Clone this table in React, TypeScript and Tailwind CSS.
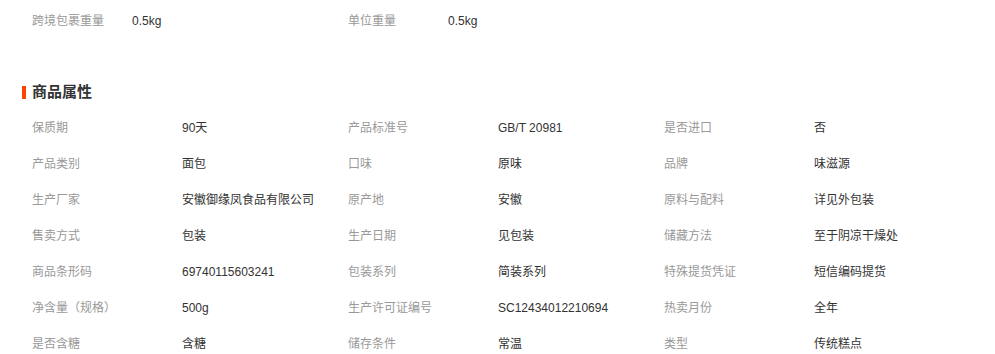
import React from 'react';

const topRow = [
  { label: '跨境包裹重量', value: '0.5kg' },
  { label: '单位重量', value: '0.5kg' },
];

const attrs: [string, string][] = [
  ['保质期', '90天'],
  ['产品标准号', 'GB/T 20981'],
  ['是否进口', '否'],
  ['产品类别', '面包'],
  ['口味', '原味'],
  ['品牌', '味滋源'],
  ['生产厂家', '安徽御缘凤食品有限公司'],
  ['原产地', '安徽'],
  ['原料与配料', '详见外包装'],
  ['售卖方式', '包装'],
  ['生产日期', '见包装'],
  ['储藏方法', '至于阴凉干燥处'],
  ['商品条形码', '69740115603241'],
  ['包装系列', '简装系列'],
  ['特殊提货凭证', '短信编码提货'],
  ['净含量（规格）', '500g'],
  ['生产许可证编号', 'SC12434012210694'],
  ['热卖月份', '全年'],
  ['是否含糖', '含糖'],
  ['储存条件', '常温'],
  ['类型', '传统糕点'],
];

export default function App() {
  return (
    <div className="w-[995px] h-[354px] overflow-hidden bg-white font-['Liberation_Sans','Noto_Sans_CJK_SC',sans-serif] text-[12px]">
      {/* Weight row */}
      <div className="mt-[3px] ml-[32px] flex h-9 items-center">
        {topRow.map((item, i) => (
          <div key={i} className="flex w-[316px] items-center">
            <span className="w-[100px] text-[#999]">{item.label}</span>
            <span className="text-[#333]">{item.value}</span>
          </div>
        ))}
      </div>

      {/* Section header */}
      <div className="mt-[36px] ml-[22px] flex h-[35px] items-center">
        <span className="mr-[6px] h-[13px] w-[4px] bg-[#ff4400]" />
        <h3 className="text-[15px] font-bold text-[#333]">商品属性</h3>
      </div>

      {/* Attribute grid */}
      <div className="ml-[32px] grid w-[948px] grid-cols-3">
        {attrs.map(([label, value], idx) => (
          <div key={idx} className="flex h-9 items-center">
            <span className="w-[150px] text-[#999]">{label}</span>
            <span className="text-[#333]">{value}</span>
          </div>
        ))}
      </div>
    </div>
  );
}
